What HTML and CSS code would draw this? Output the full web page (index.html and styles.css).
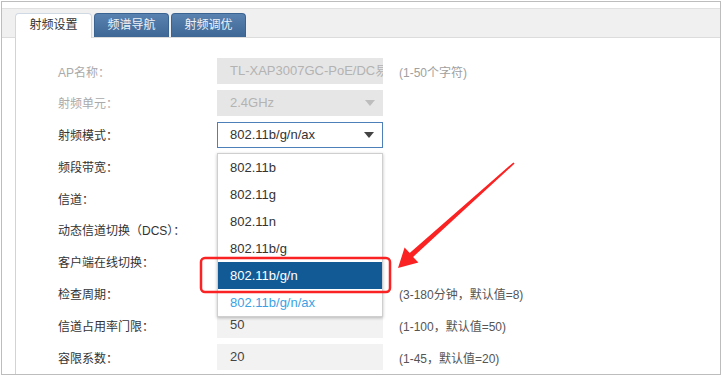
FILE: index.html
```html
<!DOCTYPE html>
<html lang="zh-CN">
<head>
    <meta charset="UTF-8">
    <title>射频设置</title>
    <link rel="stylesheet" href="styles.css">
</head>
<body>
    <div class="frame">
        <div class="tabbar">
            <div class="tab active">射频设置</div>
            <div class="tab">频谱导航</div>
            <div class="tab">射频调优</div>
        </div>
        <div class="panel">
            <div class="row off">
                <span class="label">AP名称：</span>
                <div class="field disabled">TL-XAP3007GC-PoE/DC易展</div>
                <span class="hint light">(1-50个字符)</span>
            </div>
            <div class="row off">
                <span class="label">射频单元：</span>
                <div class="field disabled select">2.4GHz<i class="caret"></i></div>
            </div>
            <div class="row">
                <span class="label">射频模式：</span>
                <div class="field select open">802.11b/g/n/ax<i class="caret"></i>
                    <ul class="dropdown">
                        <li>802.11b</li>
                        <li>802.11g</li>
                        <li>802.11n</li>
                        <li>802.11b/g</li>
                        <li class="hover">802.11b/g/n</li>
                        <li class="current">802.11b/g/n/ax</li>
                    </ul>
                </div>
            </div>
            <div class="row">
                <span class="label">频段带宽：</span>
                <div class="field"></div>
            </div>
            <div class="row">
                <span class="label">信道：</span>
                <div class="field"></div>
            </div>
            <div class="row">
                <span class="label">动态信道切换（DCS）：</span>
                <div class="field"></div>
            </div>
            <div class="row">
                <span class="label">客户端在线切换：</span>
                <div class="field"></div>
            </div>
            <div class="row">
                <span class="label">检查周期：</span>
                <div class="field"></div>
                <span class="hint">(3-180分钟，默认值=8)</span>
            </div>
            <div class="row">
                <span class="label">信道占用率门限：</span>
                <div class="field grey">50</div>
                <span class="hint">(1-100，默认值=50)</span>
            </div>
            <div class="row">
                <span class="label">容限系数：</span>
                <div class="field grey">20</div>
                <span class="hint">(1-45，默认值=20)</span>
            </div>
        </div>
    </div>

    <!-- annotation drawn over the screenshot -->
    <svg class="marks" width="722" height="376" viewBox="0 0 722 376">
        <rect x="201" y="258" width="189" height="34" rx="4" fill="none" stroke="#fa2222" stroke-width="2.5"/>
        <polygon fill="#fa2222" points="513.4,162.4 409.7,253.1 404.6,247.6 398,268 418.4,262.4 413.1,256.9 514.6,163.6"/>
    </svg>
</body>
</html>
```

FILE: styles.css
```css
* {
    margin: 0;
    padding: 0;
    box-sizing: border-box;
}

body {
    position: relative;
    width: 722px;
    height: 376px;
    background: #fff;
    font-family: "Liberation Sans", "Noto Sans CJK SC", sans-serif;
    font-size: 12px;
    color: #333;
    overflow: hidden;
}

.frame {
    margin: 1px;
    width: 720px;
    height: 374px;
    border: 1px solid #bdbdbd;
    padding-top: 6px;
    display: flex;
    flex-direction: column;
}

.tabbar {
    height: 30px;
    background: #f0f0f0;
    border-top: 1px solid #e0e0e0;
    border-bottom: 1px solid #dcdcdc;
    padding-left: 13px;
    display: flex;
    align-items: flex-end;
    gap: 2px;
}

.tab {
    width: 75px;
    height: 24px;
    line-height: 23px;
    text-align: center;
    border-radius: 4px 4px 0 0;
    color: #eef3f8;
    background: linear-gradient(#5a82b0, #3e6795);
    border: 1px solid #3b6391;
    border-bottom: none;
    font-size: 12px;
}

.tab.active {
    width: 77px;
    height: 25px;
    margin-bottom: -1px;
    color: #333;
    background: #fff;
    border: 1px solid #cfd9e4;
    border-bottom: none;
}

.panel {
    flex: 1;
    margin-left: 13px;
    border-left: 1px solid #c6d6e6;
    padding: 20px 0 0 42px;
    display: flex;
    flex-direction: column;
    gap: 5.8px;
}

.row {
    display: flex;
    align-items: center;
    height: 26px;
}

.label {
    width: 159px;
    color: #333;
}

.row.off .label {
    color: #aaa;
}

.field {
    position: relative;
    width: 166px;
    height: 26px;
    line-height: 26px;
    padding-left: 13px;
    font-size: 13px;
    color: #333;
    background: #fff;
    white-space: nowrap;
    overflow: hidden;
}

.field.disabled {
    background: #e6e6e6;
    color: #b3b3b3;
}

.field.grey {
    background: #f2f2f2;
    color: #444;
}

.field.select {
    overflow: visible;
}

.field.open {
    border: 1px solid #4d7fb8;
    line-height: 24px;
    padding-left: 12px;
}

.caret {
    position: absolute;
    right: 8px;
    top: 50%;
    margin-top: -3px;
    border-left: 5px solid transparent;
    border-right: 5px solid transparent;
    border-top: 6px solid #444;
}

.field.disabled .caret {
    border-top-color: #bdbdbd;
}

.dropdown {
    position: absolute;
    left: -1px;
    top: 30px;
    width: 166px;
    list-style: none;
    background: #fff;
    border: 1px solid #cfcfcf;
    box-shadow: 0 1px 3px rgba(0, 0, 0, 0.25);
    z-index: 5;
}

.dropdown li {
    height: 27px;
    line-height: 27px;
    padding-left: 12px;
    color: #333;
}

.dropdown li.hover {
    background: #125a96;
    color: #fff;
}

.dropdown li.current {
    color: #3aa2e4;
}

.hint {
    margin-left: 16px;
    color: #555;
}

.hint.light {
    color: #a0a0a0;
}

.marks {
    position: absolute;
    left: 0;
    top: 0;
    pointer-events: none;
    z-index: 10;
}
```
